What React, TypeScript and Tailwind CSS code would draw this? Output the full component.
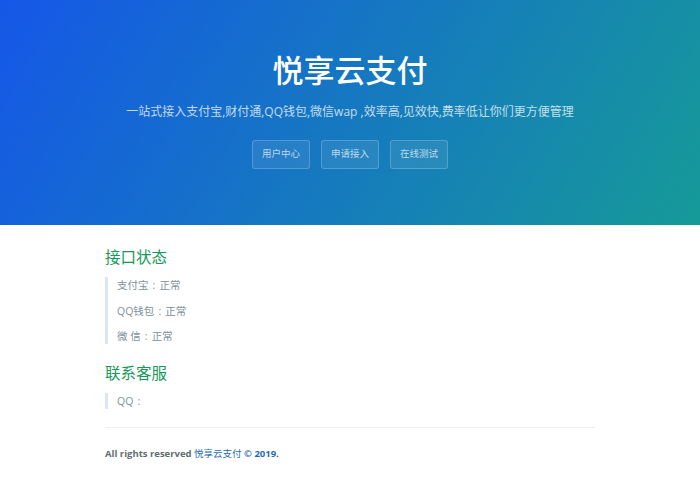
const font = {
  fontFamily: '"Open Sans", "Noto Sans CJK SC", sans-serif',
};

const links = ["用户中心", "申请接入", "在线测试"];

const status = [
  ["支付宝", "正常"],
  ["QQ钱包", "正常"],
  ["微 信", "正常"],
];

const Colon = () => <span className="inline-block w-[11px] text-center">:</span>;

export default function App() {
  return (
    <div className="min-h-[500px] bg-white text-[#606c71]" style={font}>
      <section className="flex h-[225px] flex-col items-center bg-[linear-gradient(120deg,#1557e8,#169a98)] pt-[50px] text-center text-white">
        <h1 className="text-[31px] leading-[40px] font-medium">悦享云支付</h1>
        <h2 className="mt-[12px] text-[12px] leading-[20px] text-white/75">
          一站式接入支付宝,财付通,QQ钱包,微信wap ,效率高,见效快,费率低让你们更方便管理
        </h2>
        <div className="mt-[18px] flex gap-[11px]">
          {links.map((l) => (
            <a
              key={l}
              href="#"
              className="flex h-[29px] w-[58px] items-center justify-center rounded-[3px] border border-white/20 bg-white/[0.08] text-[9.5px] text-white/70"
            >
              {l}
            </a>
          ))}
        </div>
      </section>

      <main className="mx-auto w-[490px] pt-[21px]">
        <h3 className="text-[15.5px] leading-[22px] font-normal text-[#159957]">接口状态</h3>
        <blockquote className="mt-[9px] flex flex-col gap-[9.5px] border-l-[3px] border-[#dce6f0] pl-[9px] text-[10.5px] leading-[16px] text-[#819198]">
          {status.map(([k, v]) => (
            <p key={k}>
              {k}
              <Colon />
              {v}
            </p>
          ))}
        </blockquote>
        <h3 className="mt-[18px] text-[15.5px] leading-[22px] font-normal text-[#159957]">联系客服</h3>
        <blockquote className="mt-[9px] border-l-[3px] border-[#dce6f0] pl-[9px] text-[10.5px] leading-[16px] text-[#819198]">
          <p>
            QQ
            <Colon />
          </p>
        </blockquote>
        <footer className="mt-[18px] border-t border-[#eff0f1] pt-[19px] text-[9.5px] font-bold">
          All rights reserved{" "}
          <a href="#" className="text-[#1e6bb8]">
            <span className="font-normal">悦享云支付</span> © 2019.
          </a>
        </footer>
      </main>
    </div>
  );
}
